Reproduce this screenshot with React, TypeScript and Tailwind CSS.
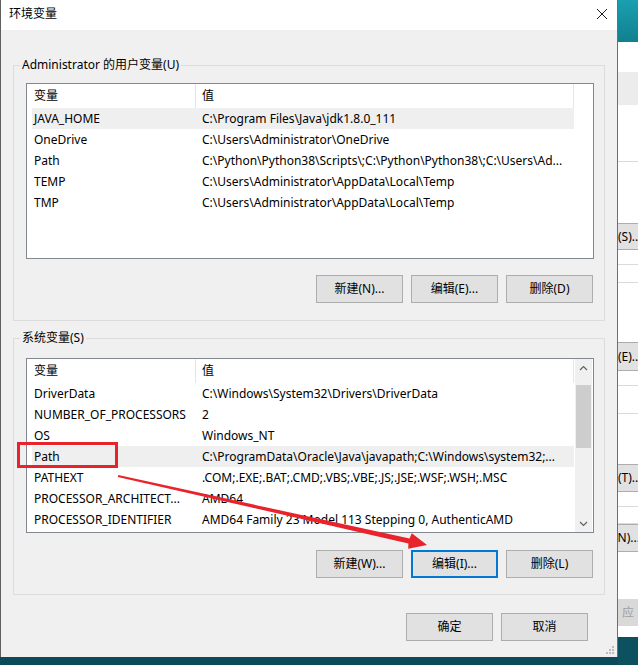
import React from "react";

const userVars: [string, string][] = [
    ["JAVA_HOME", "C:\\Program Files\\Java\\jdk1.8.0_111"],
    ["OneDrive", "C:\\Users\\Administrator\\OneDrive"],
    ["Path", "C:\\Python\\Python38\\Scripts\\;C:\\Python\\Python38\\;C:\\Users\\Ad..."],
    ["TEMP", "C:\\Users\\Administrator\\AppData\\Local\\Temp"],
    ["TMP", "C:\\Users\\Administrator\\AppData\\Local\\Temp"],
];

const systemVars: [string, string][] = [
    ["DriverData", "C:\\Windows\\System32\\Drivers\\DriverData"],
    ["NUMBER_OF_PROCESSORS", "2"],
    ["OS", "Windows_NT"],
    ["Path", "C:\\ProgramData\\Oracle\\Java\\javapath;C:\\Windows\\system32;..."],
    ["PATHEXT", ".COM;.EXE;.BAT;.CMD;.VBS;.VBE;.JS;.JSE;.WSF;.WSH;.MSC"],
    ["PROCESSOR_ARCHITECT...", "AMD64"],
    ["PROCESSOR_IDENTIFIER", "AMD64 Family 23 Model 113 Stepping 0, AuthenticAMD"],
];

function WinButton({ label, focused }: { label: string; focused?: boolean }) {
    return (
        <div
            className={`w-[87px] h-[28px] flex items-center justify-center bg-[#e1e1e1] ${
                focused ? "border-2 border-[#0078d7]" : "border border-[#adadad]"
            }`}
        >
            {label}
        </div>
    );
}

function VarList({ rows, selected, scroll, height }: { rows: [string, string][]; selected: number; scroll?: boolean; height: string }) {
    return (
        <div className={`w-[568px] ${height} border border-[#828790] bg-white flex`}>
            <div className="w-[547px] flex flex-col">
                <div className="h-[24px] flex shrink-0">
                    <div className="w-[169px] pl-[7px] flex items-center border-r border-[#e5e5e5]">变量</div>
                    <div className="w-[378px] pl-[6px] flex items-center border-r border-[#e5e5e5]">值</div>
                </div>
                {rows.map(([name, value], i) => (
                    <div
                        key={name + i}
                        className={`ml-[5px] w-[542px] h-[21px] shrink-0 flex items-center whitespace-nowrap ${
                            i === selected ? "bg-[#efefef]" : ""
                        }`}
                    >
                        <div className="w-[164px] pl-[2px] overflow-hidden">{name}</div>
                        <div className="flex-1 pl-[6px] overflow-hidden">{value}</div>
                    </div>
                ))}
            </div>
            {scroll && (
                <div className="ml-[1px] w-[17px] bg-[#f0f0f0] flex flex-col">
                    <div className="h-[17px] flex items-center justify-center">
                        <svg width="9" height="6" viewBox="0 0 9 6">
                            <path d="M1 5 L4.5 1.5 L8 5" fill="none" stroke="#606060" strokeWidth="1.2" />
                        </svg>
                    </div>
                    <div className="mt-[9px] mx-[1px] h-[63px] bg-[#cdcdcd]" />
                    <div className="flex-1" />
                    <div className="h-[17px] flex items-center justify-center">
                        <svg width="9" height="6" viewBox="0 0 9 6">
                            <path d="M1 1 L4.5 4.5 L8 1" fill="none" stroke="#606060" strokeWidth="1.2" />
                        </svg>
                    </div>
                </div>
            )}
        </div>
    );
}

function BackWindowStrip() {
    return (
        <div className="w-[20px] h-[665px] flex flex-col overflow-hidden whitespace-nowrap bg-white">
            <div className="h-[42px] shrink-0 bg-gradient-to-b from-[#1aa0b0] to-[#10808f]" />
            <div className="h-[30px] shrink-0 bg-white" />
            <div className="h-[33px] shrink-0 bg-[#ececec]" />
            <div className="h-[57px] shrink-0 border-b border-[#dadada]" />
            <div className="h-[61px] shrink-0" />
            <div className="h-[27px] shrink-0 bg-[#e1e1e1] border-y border-[#adadad] flex items-center">(S)...</div>
            <div className="h-[15px] shrink-0 border-b border-[#dadada]" />
            <div className="h-[18px] shrink-0 border-b border-[#dadada]" />
            <div className="h-[59px] shrink-0" />
            <div className="h-[29px] shrink-0 bg-[#e1e1e1] border-y border-[#adadad] flex items-center">(E)...</div>
            <div className="h-[15px] shrink-0 border-b border-[#dadada]" />
            <div className="h-[28px] shrink-0 border-b border-[#dadada]" />
            <div className="h-[50px] shrink-0" />
            <div className="h-[28px] shrink-0 bg-[#e1e1e1] border-y border-[#adadad] flex items-center">(T)...</div>
            <div className="h-[15px] shrink-0 border-b border-[#dadada]" />
            <div className="h-[17px] shrink-0 border-b border-[#dadada]" />
            <div className="h-[28px] shrink-0 bg-[#e1e1e1] border-y border-[#adadad] flex items-center -indent-[4px]">(N)...</div>
            <div className="h-[47px] shrink-0" />
            <div className="h-[27px] shrink-0 bg-[#d9d9d9] flex items-center pl-[4px] text-[#a0a0a0]">应</div>
            <div className="h-[11px] shrink-0" />
            <div className="flex-1 bg-[#0d5060]" />
        </div>
    );
}

export default function App() {
    return (
        <div
            className="relative w-[638px] h-[665px] overflow-hidden bg-[#0b4a58] text-[12px] leading-[16px] text-black flex items-start"
            style={{ fontFamily: '"Noto Sans", "Noto Sans CJK SC", sans-serif' }}
        >
            <div className="w-[1px] h-[657px] bg-[#5f5f5f]" />
            <div className="w-[617px] h-[657px] flex flex-col bg-[#f0f0f0] border-r border-[#6e6e6e]">
                <div className="h-[30px] shrink-0 bg-white flex items-center justify-between pl-[8px] pr-[9px]">
                    <span className="-mt-[2px]">环境变量</span>
                    <svg width="12" height="12" viewBox="0 0 12 12" className="-mt-[2px]">
                        <path d="M1 1 L11 11 M11 1 L1 11" stroke="#1a1a1a" strokeWidth="1" />
                    </svg>
                </div>

                <fieldset className="mt-[27px] ml-[12px] w-[592px] shrink-0 border border-[#dcdcdc] pl-[12px] pr-[10px] pt-[10px] pb-[17px]">
                    <legend className="-ml-[6px] px-[2px] leading-[16px]">Administrator 的用户变量(U)</legend>
                    <VarList rows={userVars} selected={0} height="h-[176px]" />
                    <div className="mt-[16px] flex justify-end gap-[8px] mr-[1px]">
                        <WinButton label="新建(N)..." />
                        <WinButton label="编辑(E)..." />
                        <WinButton label="删除(D)" />
                    </div>
                </fieldset>

                <fieldset className="mt-[9px] ml-[12px] w-[592px] shrink-0 border border-[#dcdcdc] pl-[12px] pr-[10px] pt-[12px] pb-[16px]">
                    <legend className="-ml-[6px] px-[2px] leading-[16px]">系统变量(S)</legend>
                    <VarList rows={systemVars} selected={3} scroll height="h-[175px]" />
                    <div className="mt-[17px] flex justify-end gap-[8px] mr-[1px]">
                        <WinButton label="新建(W)..." />
                        <WinButton label="编辑(I)..." focused />
                        <WinButton label="删除(L)" />
                    </div>
                </fieldset>

                <div className="mt-[18px] pr-[29px] flex justify-end gap-[8px]">
                    <WinButton label="确定" />
                    <WinButton label="取消" />
                </div>

                <div className="flex-1 flex items-end justify-end pr-[2px] pb-[2px]">
                    <svg width="10" height="10" viewBox="0 0 10 10">
                        <rect x="7" y="1" width="2" height="2" fill="#bdbdbd" />
                        <rect x="4" y="4" width="2" height="2" fill="#bdbdbd" />
                        <rect x="7" y="4" width="2" height="2" fill="#bdbdbd" />
                        <rect x="1" y="7" width="2" height="2" fill="#bdbdbd" />
                        <rect x="4" y="7" width="2" height="2" fill="#bdbdbd" />
                        <rect x="7" y="7" width="2" height="2" fill="#bdbdbd" />
                    </svg>
                </div>
            </div>
            <BackWindowStrip />

            {/* red annotation drawn over the dialog */}
            <svg className="absolute left-0 top-0 pointer-events-none" width="638" height="665" viewBox="0 0 638 665">
                <rect x="18.5" y="443.5" width="98" height="23" fill="none" stroke="#e8232b" strokeWidth="3" />
                <polygon
                    points="117.8,477 118.2,475 409.5,538.6 411.8,533.2 427,545 408.2,548.8 408.4,543.4"
                    fill="#e8232b"
                />
            </svg>
        </div>
    );
}
